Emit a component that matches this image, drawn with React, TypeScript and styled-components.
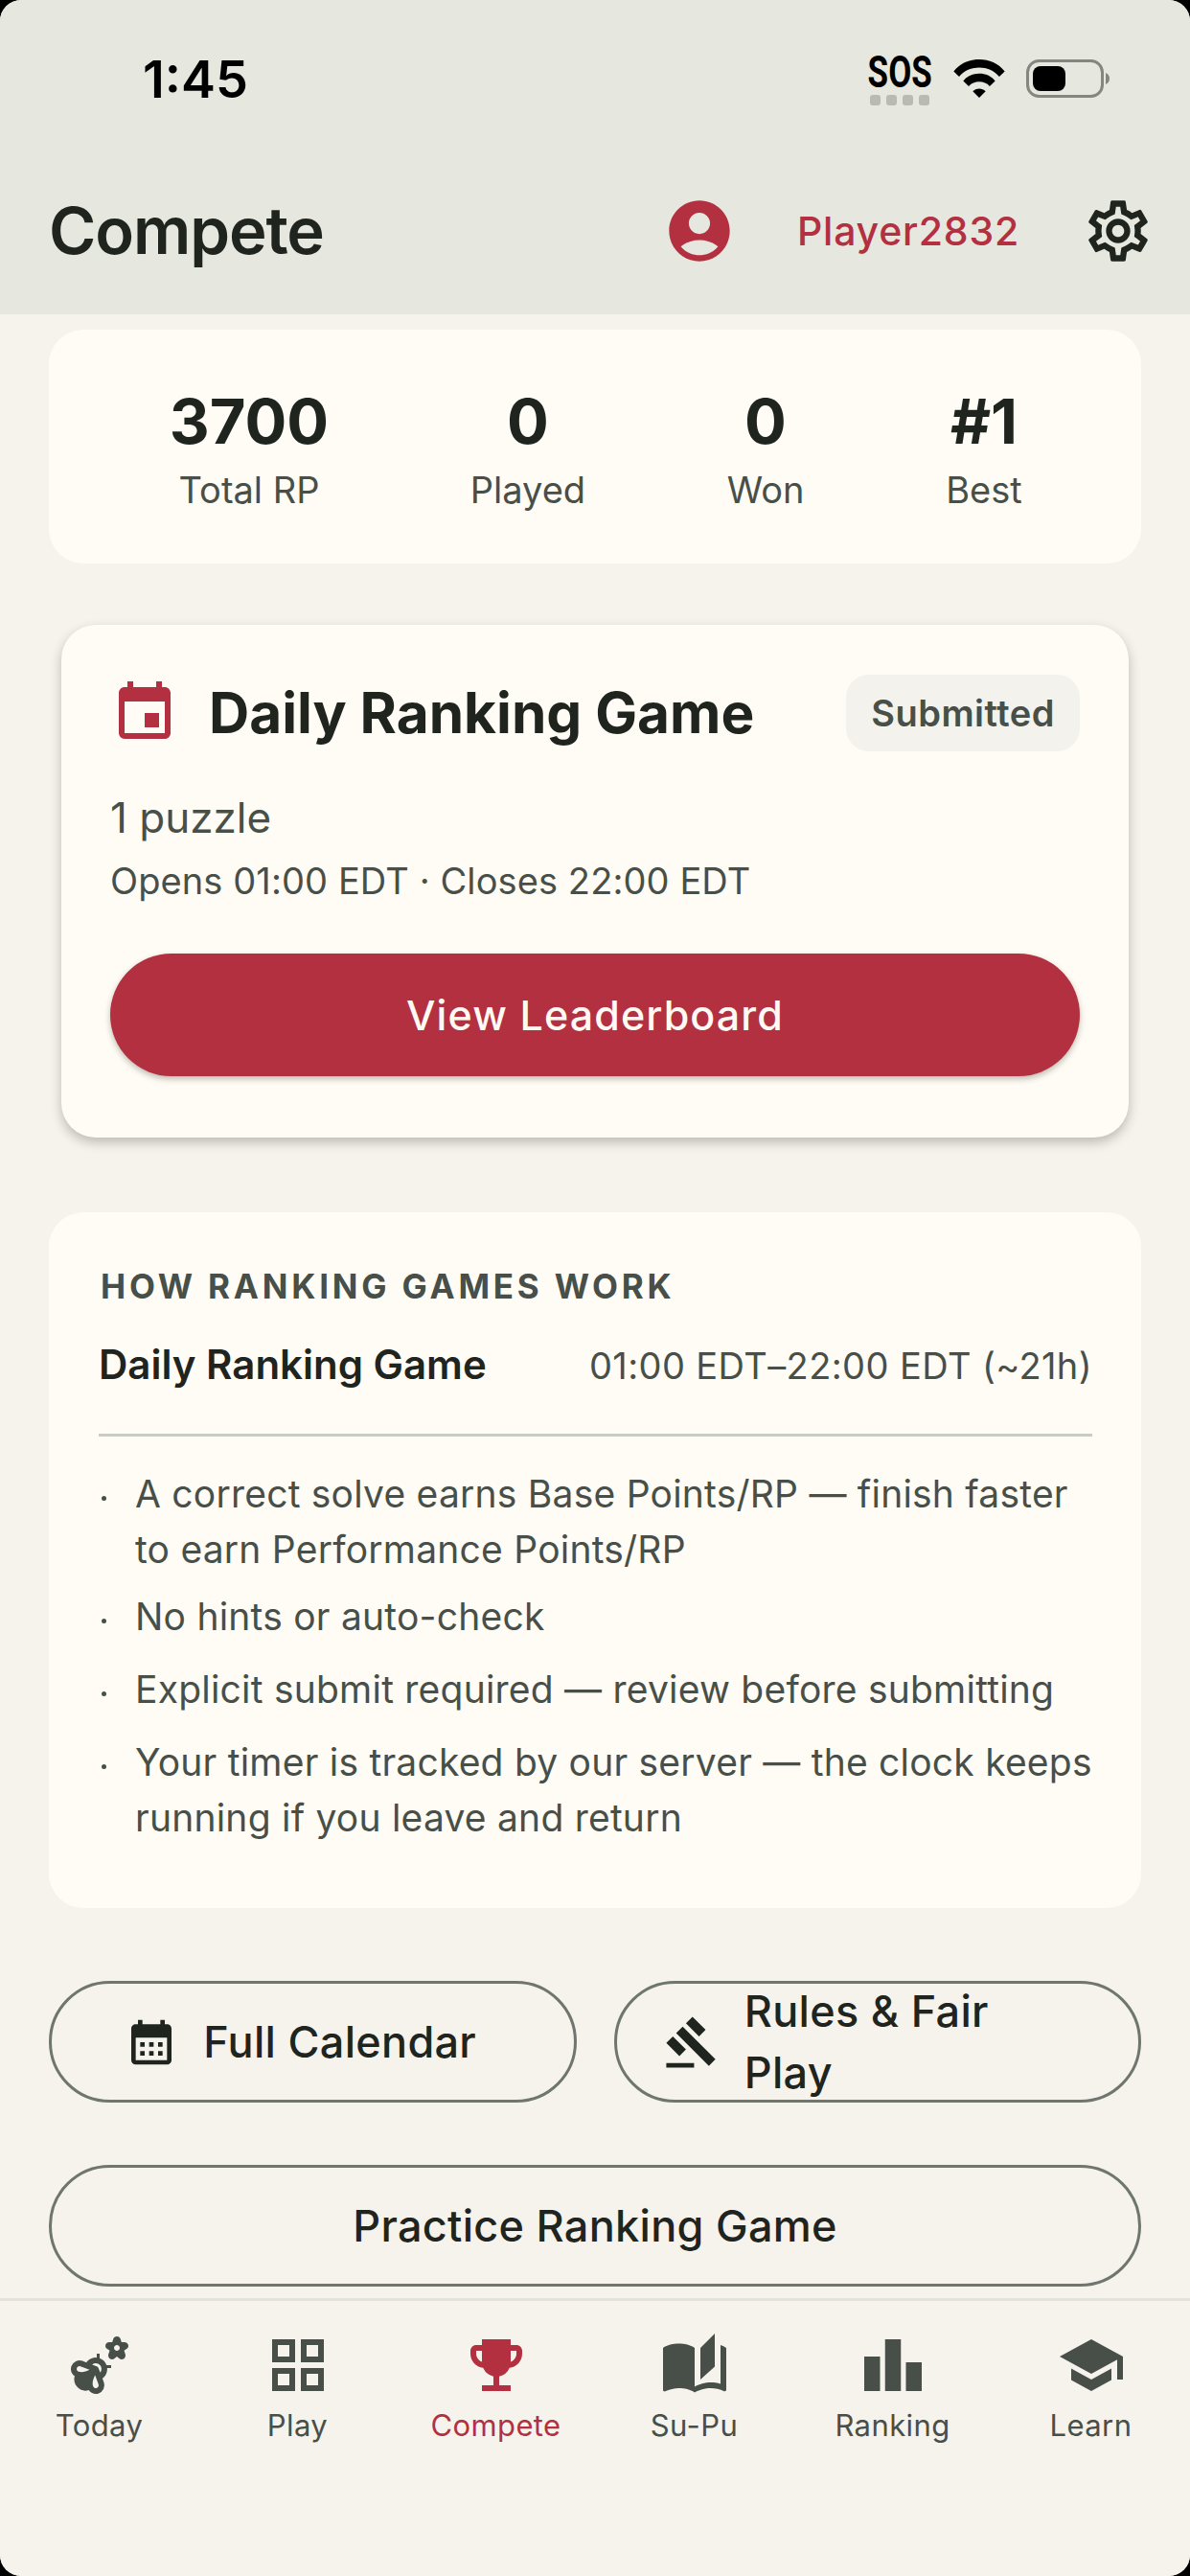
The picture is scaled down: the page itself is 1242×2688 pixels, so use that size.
import React from "react";
import styled, { createGlobalStyle } from "styled-components";
import {
  MdAccountCircle, MdOutlineSettings, MdEvent, MdCalendarMonth, MdGavel,
  MdEmojiNature, MdOutlineGridView, MdEmojiEvents, MdAutoStories, MdLeaderboard, MdSchool,
} from "react-icons/md";

const RED = "#B33040";
const INK = "#1F241F";
const MUTED = "#484F49";
const PAPER = "#FFFCF5";

const Global = createGlobalStyle`
  html, body { margin: 0; padding: 0; background: #000; }
  body { font-family: Inter, "Noto Sans", sans-serif; color: ${INK}; }
  * { box-sizing: border-box; }
`;

const Page = styled.div`
  width: 1242px; height: 2688px; overflow: hidden; border-radius: 22px;
  display: flex; flex-direction: column; background: #F5F3EC;
`;
const Header = styled.header`
  height: 328px; background: #E6E7DE; display: flex; flex-direction: column; flex: none;
`;
const StatusBar = styled.div`
  height: 166px; padding: 55px 84px 0 149px; display: flex; justify-content: space-between; align-items: flex-start;
`;
const Time = styled.div`
  font: 600 54px/56px Inter, sans-serif; color: #000; letter-spacing: 0;
`;
const StatusIcons = styled.div`display: flex; align-items: flex-start; gap: 22px;`;
const Sos = styled.div`
  width: 68px; display: flex; flex-direction: column; align-items: center; gap: 5px; margin-top: 1px;
`;
const SosText = styled.div`
  font: 700 46px/38px "Roboto", sans-serif; color: #000; transform: scaleX(.76); transform-origin: center; white-space: nowrap;
`;
const Dots = styled.div`display: flex; gap: 6px;`;
const Dot = styled.span`width: 11px; height: 11px; border-radius: 3px; background: #B9BAB2;`;
const TitleRow = styled.div`
  flex: 1; display: flex; align-items: center; padding: 0 37px 0 51px; margin-top: -12px;
`;
const Title = styled.h1`
  margin: 0; flex: 1; font: 600 67px/80px Inter, sans-serif; letter-spacing: -1.1px; color: ${INK};
`;
const Player = styled.span`
  font: 500 41px/48px Inter, sans-serif; color: ${RED}; margin: 0 65px 0 64px; letter-spacing: .8px;
`;
const Main = styled.main`
  flex: 1; padding: 16px 51px 0; display: flex; flex-direction: column;
`;
const Stats = styled.section`
  height: 244px; background: ${PAPER}; border-radius: 36px; display: flex; padding: 61px 0 0 6px;
`;
const Stat = styled.div<{ $w: number }>`
  width: ${p => p.$w}px; display: flex; flex-direction: column; align-items: center;
`;
const StatValue = styled.div`font: 700 65px/70px Inter, sans-serif; color: ${INK};`;
const StatLabel = styled.div`font: 400 38px/44px Inter, sans-serif; color: ${MUTED}; margin-top: 14px;`;
const GameCard = styled.section`
  margin: 64px 13px 0; height: 535px; background: ${PAPER}; border-radius: 36px; padding: 52px 51px;
  box-shadow: 0 5px 12px rgba(40,40,30,.28);
  display: flex; flex-direction: column;
`;
const GameHead = styled.div`display: flex; align-items: center;`;
const GameIcon = styled(MdEvent)`color: ${RED}; font-size: 72px; flex: none;`;
const GameTitle = styled.h2`
  margin: 0 0 0 31px; flex: 1; font: 700 58.500px/76px Inter, sans-serif; color: ${INK}; white-space: nowrap;
`;
const Badge = styled.span`
  height: 80px; padding: 0 26px; border-radius: 24px; background: #F3F2EC; color: ${MUTED};
  font: 600 38px/80px Inter, sans-serif; letter-spacing: .5px;
`;
const Puzzles = styled.div`font: 400 44px/50px Inter, sans-serif; color: ${MUTED}; margin-top: 44px;`;
const Hours = styled.div`font: 400 38px/46px Inter, sans-serif; color: ${MUTED}; margin-top: 18px; letter-spacing: .1px;`;
const Primary = styled.div`
  margin-top: 53px; height: 128px; border-radius: 64px; background: ${RED}; color: #FFF9F4; flex: none;
  font: 500 43px/128px Inter, sans-serif; text-align: center; letter-spacing: 1.1px;
  box-shadow: 0 3px 6px rgba(40,40,30,.3);
`;
const HowCard = styled.section`
  margin-top: 78px; height: 726px; background: ${PAPER}; border-radius: 36px; padding: 55px 40px 0 52px;
`;
const HowTitle = styled.h3`
  margin: 0; font: 700 35px/44px Inter, sans-serif; color: ${MUTED}; letter-spacing: 3.800px; padding-left: 2px;
`;
const HowRow = styled.div`
  margin: 35px 11px 0 0; padding-bottom: 46px; border-bottom: 3px solid #C9CBC5; display: flex; justify-content: space-between;
  align-items: baseline;
`;
const HowName = styled.span`font: 600 42px/50px Inter, sans-serif; color: ${INK};`;
const HowTime = styled.span`font: 400 38px/50px Inter, sans-serif; color: ${MUTED}; letter-spacing: .4px;`;
const Rules = styled.ul`margin: 31px 0 0; padding: 0; list-style: none; display: flex; flex-direction: column; gap: 18px;`;
const Rule = styled.li`
  position: relative; padding-left: 38px; font: 400 39px/58px Inter, sans-serif; color: ${MUTED}; letter-spacing: .22px;
  &::before { content: ""; position: absolute; left: 3px; top: 31px; width: 5px; height: 5px; border-radius: 50%; background: ${MUTED}; }
  &:first-child { margin-bottom: -6px; }
`;
const ButtonRow = styled.div`display: grid; grid-template-columns: 1fr 1fr; gap: 39px; margin-top: 76px;`;
const Outline = styled.div<{ $wide?: boolean }>`
  height: 127px; border: 3px solid #6F766F; border-radius: 64px; display: flex; align-items: center; justify-content: center;
  gap: 26px; font: 500 45px/64px Inter, sans-serif; color: ${INK}; letter-spacing: .3px;
  margin-top: ${p => (p.$wide ? "65px" : "0")};
  padding: 0 40px;
`;
const BtnLabel = styled.span<{ $w: number; $end?: number }>`
  width: ${p => p.$w}px; margin-right: ${p => p.$end ?? 0}px;
`;
const TabBar = styled.nav`
  height: 290px; flex: none; border-top: 3px solid #E2E3DA; display: flex; padding-top: 31px; background: #F5F3EC;
`;
const Tab = styled.div<{ $on?: boolean }>`
  flex: 1; display: flex; flex-direction: column; align-items: center; gap: 5px;
  color: ${p => (p.$on ? RED : MUTED)}; font: 400 31px/44px Inter, sans-serif; letter-spacing: .4px;
  svg { display: block; }
`;

const Wifi = () => (
  <svg width="54" height="40" viewBox="0 0 56 42" style={{ marginTop: 7 }}>
    <path fill="#000" d="M0 13C7.500 4 17 0 28 0s20.500 4 28 13l-6 6C44 12 36.500 9 28 9S12 12 6 19z" />
    <path fill="#000" d="M10.500 23.500C15 18 21 15.500 28 15.500s13 2.500 17.500 8l-6 6c-3-3.500-7-5-11.500-5s-8.500 1.500-11.500 5z" />
    <path fill="#000" d="M21 35c2-2 4.500-3 7-3s5 1 7 3l-7 7z" />
  </svg>
);
const Battery = () => (
  <svg width="87" height="40" viewBox="0 0 87 40" style={{ marginTop: 7 }}>
    <rect x="1.500" y="1.500" width="78" height="37" rx="12" fill="none" stroke="#85867F" strokeWidth="3" />
    <rect x="7" y="7" width="34" height="26" rx="8" fill="#000" />
    <path d="M83 14c2.500 1 4 3 4 6s-1.500 5-4 6z" fill="#85867F" />
  </svg>
);

const rules = [
  "A correct solve earns Base Points/RP — finish faster to earn Performance Points/RP",
  "No hints or auto-check",
  "Explicit submit required — review before submitting",
  "Your timer is tracked by our server — the clock keeps running if you leave and return",
];
const tabs = [
  { label: "Today", Icon: MdEmojiNature },
  { label: "Play", Icon: MdOutlineGridView },
  { label: "Compete", Icon: MdEmojiEvents, on: true },
  { label: "Su-Pu", Icon: MdAutoStories },
  { label: "Ranking", Icon: MdLeaderboard },
  { label: "Learn", Icon: MdSchool },
];
const stats: [string, string, number][] = [
  ["3700", "Total RP", 406], ["0", "Played", 176], ["0", "Won", 320], ["#1", "Best", 136],
];

export default function App() {
  return (
    <Page>
      <Global />
      <Header>
        <StatusBar>
          <Time>1:45</Time>
          <StatusIcons>
            <Sos>
              <SosText>SOS</SosText>
              <Dots><Dot /><Dot /><Dot /><Dot /></Dots>
            </Sos>
            <Wifi />
            <Battery />
          </StatusIcons>
        </StatusBar>
        <TitleRow>
          <Title>Compete</Title>
          <MdAccountCircle size={76} color={RED} />
          <Player>Player2832</Player>
          <MdOutlineSettings size={76} color={INK} />
        </TitleRow>
      </Header>
      <Main>
        <Stats>
          {stats.map(([v, l, w]) => (
            <Stat key={l} $w={w}><StatValue>{v}</StatValue><StatLabel>{l}</StatLabel></Stat>
          ))}
        </Stats>
        <GameCard>
          <GameHead>
            <GameIcon />
            <GameTitle>Daily Ranking Game</GameTitle>
            <Badge>Submitted</Badge>
          </GameHead>
          <Puzzles>1 puzzle</Puzzles>
          <Hours>Opens 01:00 EDT · Closes 22:00 EDT</Hours>
          <Primary>View Leaderboard</Primary>
        </GameCard>
        <HowCard>
          <HowTitle>HOW RANKING GAMES WORK</HowTitle>
          <HowRow>
            <HowName>Daily Ranking Game</HowName>
            <HowTime>01:00 EDT–22:00 EDT (~21h)</HowTime>
          </HowRow>
          <Rules>{rules.map(r => <Rule key={r}>{r}</Rule>)}</Rules>
        </HowCard>
        <ButtonRow>
          <Outline><MdCalendarMonth size={56} /><BtnLabel $w={310}>Full Calendar</BtnLabel></Outline>
          <Outline><MdGavel size={58} /><BtnLabel $w={290} $end={72}>Rules &amp; Fair Play</BtnLabel></Outline>
        </ButtonRow>
        <Outline $wide>Practice Ranking Game</Outline>
      </Main>
      <TabBar>
        {tabs.map(({ label, Icon, on }) => (
          <Tab key={label} $on={on}><Icon size={72} />{label}</Tab>
        ))}
      </TabBar>
    </Page>
  );
}
